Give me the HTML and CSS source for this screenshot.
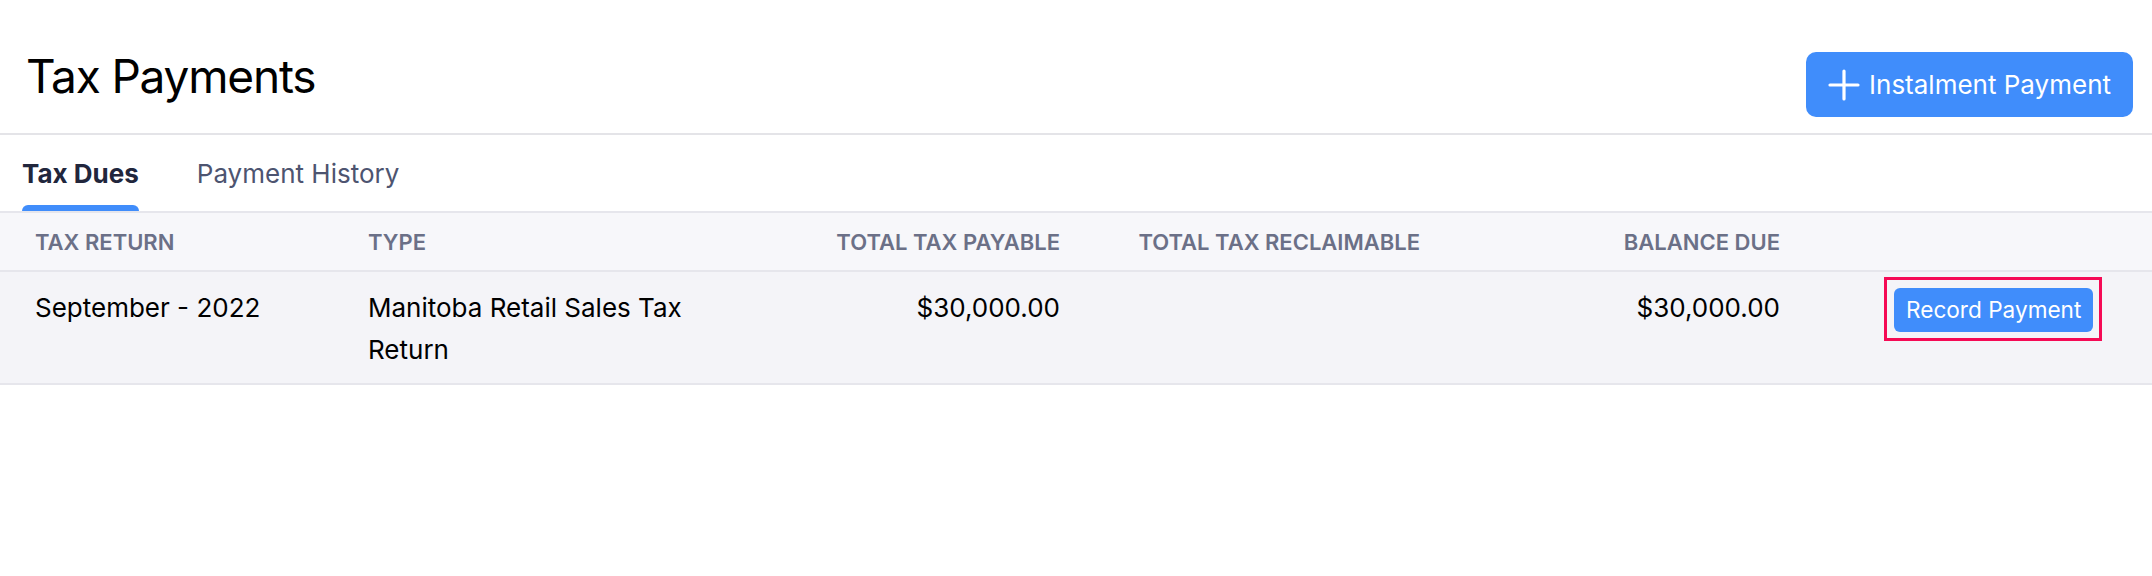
FILE: index.html
```html
<!DOCTYPE html>
<html lang="en">
<head>
<meta charset="utf-8">
<title>Tax Payments</title>
<link rel="stylesheet" href="styles.css">
</head>
<body>
<div class="page">
  <header class="page-header">
    <h1 class="title">Tax Payments</h1>
    <button class="btn-primary" type="button">
      <svg class="plus" viewBox="0 0 32 32" aria-hidden="true"><path d="M16 2v28M2 16h28"/></svg>
      <span>Instalment Payment</span>
    </button>
  </header>
  <nav class="tabs">
    <a class="tab active">Tax Dues</a>
    <a class="tab">Payment History</a>
  </nav>
  <div class="table">
    <div class="row head">
      <div class="cell">Tax Return</div>
      <div class="cell">Type</div>
      <div class="cell num">Total Tax Payable</div>
      <div class="cell num">Total Tax Reclaimable</div>
      <div class="cell num">Balance Due</div>
      <div class="cell"></div>
    </div>
    <div class="row body">
      <div class="cell">September - 2022</div>
      <div class="cell">Manitoba Retail Sales Tax Return</div>
      <div class="cell num">$30,000.00</div>
      <div class="cell num"></div>
      <div class="cell num">$30,000.00</div>
      <div class="cell action"><span class="highlight"><button class="btn-record" type="button">Record Payment</button></span></div>
    </div>
  </div>
</div>
</body>
</html>
```

FILE: styles.css
```css
* { box-sizing: border-box; }
html, body { margin: 0; padding: 0; background: #ffffff; }
body {
  font-family: Inter, "Noto Sans", "Liberation Sans", sans-serif;
  color: #000000;
  width: 2152px;
  height: 576px;
  overflow: hidden;
}

.page-header {
  display: flex;
  justify-content: space-between;
  align-items: flex-start;
  height: 135px;
  padding: 0 19px 0 26px;
  border-bottom: 2px solid #e4e4e8;
}

.title {
  margin: 0;
  padding-top: 48px;
  font-size: 46px;
  line-height: 56px;
  font-weight: 400;
  letter-spacing: -1.2px;
  color: #000000;
}

.btn-primary {
  margin-top: 52px;
  height: 65px;
  display: flex;
  align-items: center;
  gap: 9px;
  padding: 0 22px;
  border: none;
  border-radius: 10px;
  background: #408dfb;
  color: #ffffff;
  font-family: inherit;
  font-size: 26px;
  font-weight: 400;
}

.plus {
  width: 32px;
  height: 32px;
  fill: none;
  stroke: #ffffff;
  stroke-width: 3.2;
  stroke-linecap: round;
}

.tabs {
  display: flex;
  gap: 58px;
  padding-left: 22px;
  height: 76px;
}

.tab {
  display: flex;
  flex-direction: column;
  padding-top: 23px;
  font-size: 26px;
  line-height: 32px;
  color: #4d5470;
}

.tab::after {
  content: "";
  display: block;
  height: 6px;
  margin-top: 15px;
  border-radius: 6px 6px 0 0;
}

.tab.active {
  font-weight: 700;
  color: #21263c;
}

.tab.active::after { background: #408dfb; }

.table { border-top: 2px solid #e6e6ec; }

.row {
  display: grid;
  grid-template-columns: 333px 380px 352px 360px 360px 1fr;
  padding: 0 15px;
  border-bottom: 2px solid #e6e6ec;
}

.cell { padding: 0 20px; }
.cell.num { text-align: right; }

.row.head {
  height: 59px;
  align-items: center;
  background: #f7f7fa;
  font-size: 22px;
  line-height: 28px;
  font-weight: 600;
  color: #6b7087;
  text-transform: uppercase;
}

.row.body {
  background: #f4f4f8;
  padding-top: 15px;
  padding-bottom: 12px;
  font-size: 26px;
  line-height: 42px;
  color: #000000;
}

.cell.action { padding-left: 94px; }

.highlight {
  position: relative;
  display: inline-block;
  margin-top: 1px;
  vertical-align: top;
}

.highlight::after {
  content: "";
  position: absolute;
  top: -11px;
  right: -9px;
  bottom: -9px;
  left: -10px;
  border: 3px solid #f50a55;
  pointer-events: none;
}

.btn-record {
  display: block;
  height: 44px;
  padding: 0 12px;
  border: none;
  border-radius: 6px;
  background: #408dfb;
  color: #ffffff;
  font-family: inherit;
  font-size: 22.6px;
  line-height: 44px;
}
```
